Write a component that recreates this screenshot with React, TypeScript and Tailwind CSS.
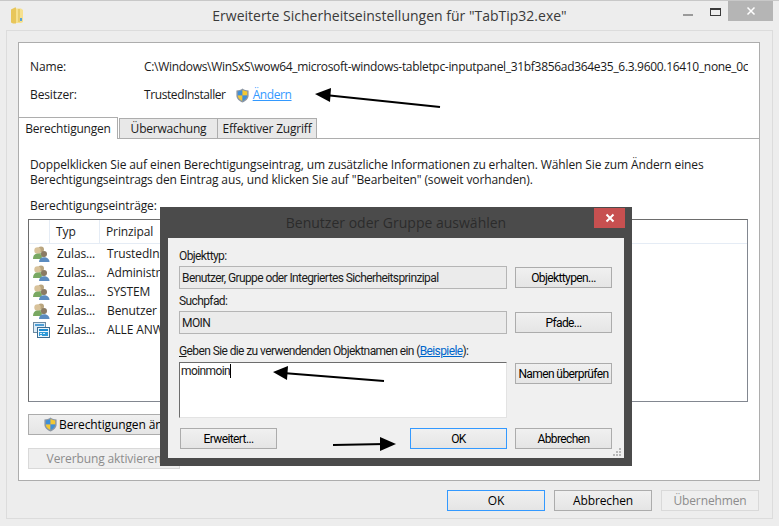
const WIN_FONT = "font-['Open_Sans',sans-serif]"

function Shield({ size = 16 }: { size?: number }) {
  return (
    <svg width={size} height={size} viewBox="0 0 16 16" className="shrink-0">
      <path d="M8 .5C6 2 4 2.600 1.500 2.600V8c0 3.600 2.800 6 6.500 7.500 3.700-1.500 6.500-3.900 6.500-7.500V2.600C12 2.600 10 2 8 .5z" fill="#8d97a3" />
      <path d="M8 2C6.400 3 4.600 3.600 3 3.700V8h5z" fill="#3f8fd8" />
      <path d="M8 2c1.600 1 3.400 1.600 5 1.700V8H8z" fill="#f3c832" />
      <path d="M3 8h5v5.900C5.200 12.700 3 10.800 3 8z" fill="#f3c832" />
      <path d="M13 8H8v5.900c2.800-1.200 5-3.100 5-5.900z" fill="#3f8fd8" />
    </svg>
  )
}

function UsersIcon() {
  return (
    <svg width="17" height="16" viewBox="0 0 17 16" className="shrink-0">
      <circle cx="8" cy="3.500" r="3" fill="#b9a57e" />
      <path d="M4 11c0-3 1.500-4.500 4-4.500s4 1.500 4 4.500z" fill="#9cb884" />
      <circle cx="4.500" cy="4.500" r="3.200" fill="#d8c29a" />
      <path d="M0 13c0-3.500 1.800-5.500 4.500-5.500S9 9.500 9 13z" fill="#79a862" />
      <circle cx="11" cy="8" r="3" fill="#8a7a64" />
      <path d="M6 16c0-3 2-4.800 5-4.800s5.500 1.800 5.500 4.800z" fill="#5b8cc0" />
    </svg>
  )
}

function GroupIcon() {
  return (
    <svg width="17" height="16" viewBox="0 0 17 16" className="shrink-0">
      <rect x="0.500" y="0.500" width="12" height="10" fill="#dcecf8" stroke="#6d8ba3" />
      <rect x="2" y="2" width="9" height="2" fill="#4f9fd6" />
      <rect x="4.500" y="5.500" width="12" height="10" fill="#eef6fb" stroke="#3d6d92" />
      <rect x="6" y="7" width="9" height="2" fill="#1c8ad0" />
      <rect x="6" y="10" width="9" height="4" fill="#2f9ad8" />
      <path d="M7 11h2v1H7zM10 11h2v1h-2zM7 13h2v1H7z" fill="#d8eefa" />
    </svg>
  )
}

function FolderIcon() {
  return (
    <svg width="14" height="17" viewBox="0 0 14 17">
      <path d="M1 2.500 5 .5h1v16H3l-2-1z" fill="#e8c65a" />
      <path d="M6 1.500h5l2 1.500v12l-2 1H6z" fill="#f6e08e" />
      <path d="M9 2v13" stroke="#d9b94d" />
      <rect x="10" y="11" width="2" height="3" fill="#5aa5d8" />
    </svg>
  )
}

function WinButton({ label, state, icon, className = '' }: { label: string; state?: 'focus' | 'off'; icon?: boolean; className?: string }) {
  let look = 'border-[#acacac] text-black bg-gradient-to-b from-[#f0f0f0] to-[#e5e5e5]'
  if (state === 'focus') look = 'border-[#3399ff] text-black bg-gradient-to-b from-[#f0f0f0] to-[#e5e5e5]'
  if (state === 'off') look = 'border-[#d9d9d9] text-[#8c8c8c] bg-[#efefef]'
  return (
    <div className={`h-[21px] shrink-0 flex items-center justify-center whitespace-nowrap border ${look} ${className}`}>
      {icon && <span className="mr-[1px]"><Shield size={15} /></span>}
      {label}
    </div>
  )
}

const rows = [
  { name: 'TrustedInstaller', group: false },
  { name: 'Administratoren', group: false },
  { name: 'SYSTEM', group: false },
  { name: 'Benutzer (MOIN\\Benutzer)', group: false },
  { name: 'ALLE ANWENDUNGSPAKETE', group: true },
]

function PermissionList() {
  return (
    <div className="mt-[6px] mr-[11px] h-[183px] border border-[#828790] border-t-[#6d6d6d] border-l-[#6d6d6d]">
      <div className="h-[24px] flex border-b border-[#e5ecf5]">
        <div className="w-[21px] border-r border-[#e5ecf5]" />
        <div className="w-[50px] pl-[6px] border-r border-[#e5ecf5] flex items-center">Typ</div>
        <div className="pl-[6px] flex items-center">Prinzipal</div>
      </div>
      <div className="pt-[1px]">
        {rows.map((r) => (
          <div key={r.name} className="h-[18.9px] flex items-center">
            <div className="w-[21px] pl-[4px] flex">{r.group ? <GroupIcon /> : <UsersIcon />}</div>
            <div className="w-[50px] pl-[7px]">Zulas...</div>
            <div className="pl-[7px] whitespace-nowrap">{r.name}</div>
          </div>
        ))}
      </div>
    </div>
  )
}

function SelectDialog() {
  return (
    <div className="absolute left-[160px] top-[207px] w-[472px] h-[259px] bg-[#4b4b4b] flex flex-col font-['Roboto',sans-serif] text-[12px] tracking-[-0.6px] text-[#1a1a1a]">
      <div className="h-[31px] relative flex items-center justify-center text-[#2b2b2b] text-[14px] tracking-normal font-['Open_Sans',sans-serif]">
        Benutzer oder Gruppe auswählen
        <div className="absolute right-[7px] top-[1px] w-[31px] h-[20px] bg-[#c75050] flex items-center justify-center">
          <svg width="10" height="10" viewBox="0 0 10 10">
            <path d="M1.500 1.500l7 7M8.500 1.500l-7 7" stroke="#fff" strokeWidth="2" />
          </svg>
        </div>
      </div>
      <div className="mx-[8px] h-[220px] bg-[#f0f0f0] pl-[11px] pr-[12px] pt-[10px] relative">
        <div className="h-[17px] leading-[17px]">Objekttyp:</div>
        <div className="flex gap-[8px] mt-[1px] items-center">
          <div className="w-[328px] h-[23px] flex items-center pl-[2px] bg-[#ebebeb] border border-[#b5b5b5]">
            Benutzer, Gruppe oder Integriertes Sicherheitsprinzipal
          </div>
          <WinButton label="Objekttypen..." className="w-[97px]" />
        </div>
        <div className="h-[17px] leading-[17px] mt-[4px]">Suchpfad:</div>
        <div className="flex gap-[8px] mt-[1px] items-center">
          <div className="w-[328px] h-[23px] flex items-center pl-[2px] bg-[#ebebeb] border border-[#b5b5b5]">
            MOIN
          </div>
          <WinButton label="Pfade..." className="w-[97px]" />
        </div>
        <div className="h-[17px] leading-[17px] mt-[9px]">
          <span className="underline">G</span>eben Sie die zu verwendenden Objektnamen ein (
          <span className="text-[#0066cc] underline">Beispiele</span>):
        </div>
        <div className="flex gap-[8px] mt-[2px] items-start">
          <div className="w-[328px] h-[56px] bg-white border border-[#e3e3e3] border-t-[#6d6d6d] border-l-[#6d6d6d] pl-[1px] leading-[17px]">
            <span className="border-r border-black">moinmoin</span>
          </div>
          <WinButton label="Namen überprüfen" className="w-[97px] mt-[1px]" />
        </div>
        <div className="flex mt-[10px] pl-[1px]">
          <WinButton label="Erweitert..." className="w-[97px]" />
          <WinButton label="OK" state="focus" className="w-[97px] ml-[133px]" />
          <WinButton label="Abbrechen" className="w-[97px] ml-[8px]" />
        </div>
        <svg width="10" height="10" viewBox="0 0 10 10" className="absolute right-[2px] bottom-[1px]">
          <path d="M7 1h2v2H7zM4 4h2v2H4zM7 4h2v2H7zM1 7h2v2H1zM4 7h2v2H4zM7 7h2v2H7z" fill="#b8b8b8" />
        </svg>
      </div>
    </div>
  )
}

function Arrow({ x1, y1, x2, y2, head }: { x1: number; y1: number; x2: number; y2: number; head: string }) {
  return (
    <g>
      <line x1={x1} y1={y1} x2={x2} y2={y2} stroke="#000" strokeWidth="2" />
      <polygon points={head} fill="#000" />
    </g>
  )
}

export default function App() {
  return (
    <div className={`relative w-[779px] h-[526px] overflow-hidden bg-[#ededed] flex flex-col text-[12px] text-[#1a1a1a] ${WIN_FONT}`}>
      <div className="h-[30px] shrink-0 relative flex items-center justify-center border-t border-[#c8c8c8] text-[14px] text-[#3a3a3a]">
        <div className="absolute left-[10px] top-[6px]"><FolderIcon /></div>
        Erweiterte Sicherheitseinstellungen für "TabTip32.exe"
        <div className="absolute right-[6px] top-0 flex items-start">
          <div className="w-[10px] h-[2px] bg-[#9a9a9a] mt-[13px] mr-[17px]" />
          <div className="w-[11px] h-[8px] border border-[#3a3a3a] border-t-2 mt-[7px] mr-[7px]" />
          <div className="w-[45px] h-[20px] bg-[#b5b5b5] flex items-center justify-center">
            <svg width="10" height="10" viewBox="0 0 10 10">
              <path d="M1.500 1.500l7 7M8.500 1.500l-7 7" stroke="#fff" strokeWidth="1.500" />
            </svg>
          </div>
        </div>
      </div>

      <div className="flex-1 mx-[6px] mb-[7px] border border-[#dcdcdc] pt-[11px] pl-[11px] pr-[11px] flex flex-col tracking-[-0.12px]">
        <div className="h-[439px] w-[742px] bg-white border border-[#adadad] flex flex-col">
          <div className="pt-[15px] h-[75px] shrink-0">
            <div className="flex h-[18px] items-center pl-[11px]">
              <span className="w-[114px] shrink-0">Name:</span>
              <span className="w-[604px] overflow-hidden whitespace-nowrap tracking-[-0.31px]">
                C:\Windows\WinSxS\wow64_microsoft-windows-tabletpc-inputpanel_31bf3856ad364e35_6.3.9600.16410_none_0ce'
              </span>
            </div>
            <div className="flex h-[18px] items-center pl-[11px] mt-[10px]">
              <span className="w-[114px] shrink-0">Besitzer:</span>
              <span className="tracking-[-0.4px]">TrustedInstaller</span>
              <span className="ml-[9px] mr-[3px]"><Shield size={15} /></span>
              <span className="text-[#3399ff] underline tracking-[-0.4px]">Ändern</span>
            </div>
          </div>
          <div className="h-[21px] shrink-0 flex items-end border-b border-[#adadad] tracking-[-0.2px]">
            <div className="w-[99px] h-[22px] -mb-[1px] bg-white border-t border-r border-[#adadad] flex items-center justify-center">Berechtigungen</div>
            <div className="w-[99px] h-[20px] ml-[1px] bg-[#e8e8e8] border-t border-r border-l border-[#adadad] flex items-center justify-center">Überwachung</div>
            <div className="w-[99px] h-[20px] bg-[#e8e8e8] border-t border-r border-[#adadad] flex items-center justify-center">Effektiver Zugriff</div>
          </div>
          <div className="flex-1 pl-[9px] pt-[18px]">
            <div className="pl-[2px] leading-[15px] whitespace-nowrap">
              <div>Doppelklicken Sie auf einen Berechtigungseintrag, um zusätzliche Informationen zu erhalten. Wählen Sie zum Ändern eines</div>
              <div>Berechtigungseintrags den Eintrag aus, und klicken Sie auf "Bearbeiten" (soweit vorhanden).</div>
              <div className="mt-[11px]">Berechtigungseinträge:</div>
            </div>
            <PermissionList />
            <WinButton label="Berechtigungen ändern" icon className="w-[200px] mt-[12px] justify-start pl-[14px]" />
            <WinButton label="Vererbung aktivieren" state="off" className="w-[152px] mt-[13px]" />
          </div>
        </div>
        <div className="flex justify-end gap-[9px] mt-[9px] pr-[2px]">
          <WinButton label="OK" state="focus" className="w-[98px]" />
          <WinButton label="Abbrechen" className="w-[98px]" />
          <WinButton label="Übernehmen" state="off" className="w-[98px]" />
        </div>
      </div>

      <SelectDialog />

      <svg width="779" height="526" className="absolute inset-0 pointer-events-none">
        <Arrow x1={440} y1={107} x2={325} y2={95} head="315,94 331,88 330,102" />
        <Arrow x1={384} y1={381} x2={283} y2={373} head="273,372 288,366 287,380" />
        <Arrow x1={333} y1={445} x2={385} y2={444} head="396,444 380,437 380,451" />
      </svg>
    </div>
  )
}
